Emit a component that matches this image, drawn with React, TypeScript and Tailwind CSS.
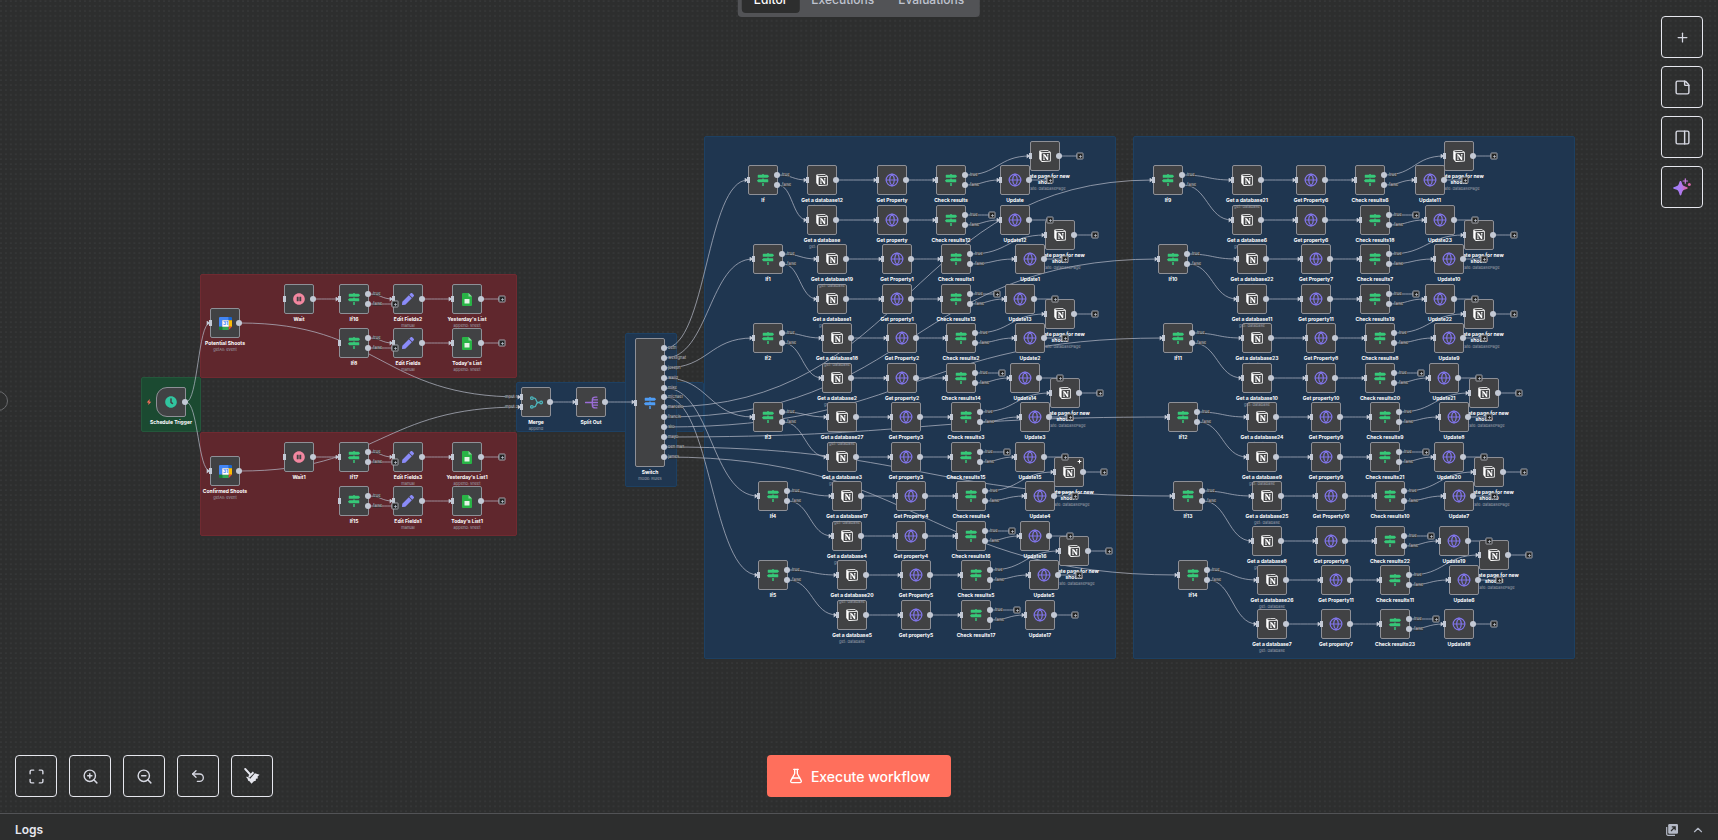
import { type ReactNode } from 'react';
import { ChevronUp, FlaskConical, Globe, Maximize, PanelRight, Plus, StickyNote, Undo2, ZoomIn, ZoomOut } from 'lucide-react';
import { FaClock, FaMapSigns, FaPauseCircle, FaPen } from 'react-icons/fa';
import { SiNotion } from 'react-icons/si';

type Kind = 'clock' | 'calendar' | 'wait' | 'if' | 'edit' | 'sheet' | 'merge' | 'split' | 'switch' | 'notion' | 'http';

type FlowNode = {
  kind: Kind;
  x: number;
  y: number;
  label: string;
  sub?: string;
  front?: boolean;
  noInput?: boolean;
};

type Edge = [number, number, number, number];
type Point = [number, number];
type PortLabel = { x: number; y: number; text: string };

const nodes: FlowNode[] = [];
const edges: Edge[] = [];
const pluses: Point[] = [];
const portLabels: PortLabel[] = [];

const HALF = 15;

function link(x1: number, y1: number, x2: number, y2: number) {
  edges.push([x1 + HALF, y1, x2 - HALF, y2]);
}

function stub(x: number, y: number, length: number) {
  edges.push([x + HALF, y, x + length, y]);
  pluses.push([x + length, y]);
}

function branchLabels(x: number, y: number) {
  portLabels.push({ x: x + 19, y: y - 5, text: 'true' }, { x: x + 19, y: y + 5, text: 'false' });
}

/* ---------- left part: calendars and sheets ---------- */

nodes.push(
  { kind: 'clock', x: 171, y: 402, label: 'Schedule Trigger', noInput: true },
  { kind: 'calendar', x: 225, y: 323, label: 'Potential Shoots', sub: 'getAll: event' },
  { kind: 'calendar', x: 225, y: 471, label: 'Confirmed Shoots', sub: 'getAll: event' },
);
link(171, 402, 225, 323);
link(171, 402, 225, 471);
edges.push([240, 323, 521, 397], [240, 471, 521, 407]);

const sheetRows = [
  { y: 299, wait: 'Wait', cond: 'If16', edit: 'Edit Fields2', sheet: "Yesterday's List" },
  { y: 343, cond: 'If8', edit: 'Edit Fields', sheet: "Today's List" },
  { y: 457, wait: 'Wait1', cond: 'If17', edit: 'Edit Fields3', sheet: "Yesterday's List1" },
  { y: 501, cond: 'If15', edit: 'Edit Fields1', sheet: "Today's List1" },
];

for (const row of sheetRows) {
  if (row.wait) {
    nodes.push({ kind: 'wait', x: 299, y: row.y, label: row.wait });
    link(299, row.y, 354, row.y);
  }
  nodes.push(
    { kind: 'if', x: 354, y: row.y, label: row.cond },
    { kind: 'edit', x: 408, y: row.y, label: row.edit, sub: 'manual' },
    { kind: 'sheet', x: 467, y: row.y, label: row.sheet, sub: 'append: sheet' },
  );
  link(354, row.y - 5, 408, row.y);
  stub(354, row.y + 5, 41);
  branchLabels(354, row.y);
  link(408, row.y, 467, row.y);
  stub(467, row.y, 35);
}

/* ---------- merge, split, switch ---------- */

nodes.push(
  { kind: 'merge', x: 536, y: 402, label: 'Merge', sub: 'append' },
  { kind: 'split', x: 591, y: 402, label: 'Split Out' },
  { kind: 'switch', x: 650, y: 402, label: 'Switch', sub: 'mode: Rules' },
);
link(536, 402, 591, 402);
link(591, 402, 650, 402);
portLabels.push({ x: 505, y: 397, text: 'Input 1' }, { x: 505, y: 407, text: 'Input 2' });

const people = ['beth', 'weslighat', 'joseph', 'walid', 'mike', 'michael', 'marcelo', 'francis', 'silo', 'mayo', 'ben max', 'james'];
const switchY = (i: number) => Math.round(348 + i * 9.88);
people.forEach((text, i) => portLabels.push({ x: 668, y: switchY(i), text }));

/* ---------- property branches ---------- */

type Line = { y: number; db: string; prop: string; check: string; update: string; xs: [number, number, number, number]; front?: boolean };
type Branch = { x: number; y: number; label: string; main: Line; alt: Line; page: [number, number, string] };

const branches: Branch[] = [
  {
    x: 763, y: 180, label: 'If', page: [1045, 156, ''],
    main: { y: 180, db: '12', prop: '', check: '', update: '', xs: [822, 892, 951, 1015] },
    alt: { y: 220, db: '', prop: '', check: '12', update: '12', xs: [822, 892, 951, 1015] },
  },
  {
    x: 768, y: 259, label: 'If1', page: [1060, 235, '1'],
    main: { y: 259, db: '19', prop: '1', check: '1', update: '1', xs: [832, 897, 956, 1030], front: true },
    alt: { y: 299, db: '1', prop: '1', check: '13', update: '13', xs: [832, 897, 956, 1020] },
  },
  {
    x: 768, y: 338, label: 'If2', page: [1060, 314, '2'],
    main: { y: 338, db: '18', prop: '2', check: '2', update: '2', xs: [837, 902, 961, 1030], front: true },
    alt: { y: 378, db: '2', prop: '2', check: '14', update: '14', xs: [837, 902, 961, 1025] },
  },
  {
    x: 768, y: 417, label: 'If3', page: [1065, 393, '3'],
    main: { y: 417, db: '27', prop: '3', check: '3', update: '3', xs: [842, 906, 966, 1035], front: true },
    alt: { y: 457, db: '3', prop: '3', check: '15', update: '15', xs: [842, 906, 966, 1030] },
  },
  {
    x: 773, y: 496, label: 'If4', page: [1069, 472, '4'],
    main: { y: 496, db: '17', prop: '4', check: '4', update: '4', xs: [847, 911, 971, 1040], front: true },
    alt: { y: 536, db: '4', prop: '4', check: '16', update: '16', xs: [847, 911, 971, 1035] },
  },
  {
    x: 773, y: 575, label: 'If5', page: [1074, 551, '5'],
    main: { y: 575, db: '20', prop: '5', check: '5', update: '5', xs: [852, 916, 976, 1044], front: true },
    alt: { y: 615, db: '5', prop: '5', check: '17', update: '17', xs: [852, 916, 976, 1040] },
  },
  {
    x: 1168, y: 180, label: 'If9', page: [1459, 156, '6'],
    main: { y: 180, db: '21', prop: '6', check: '6', update: '11', xs: [1247, 1311, 1370, 1430], front: true },
    alt: { y: 220, db: '6', prop: '6', check: '18', update: '23', xs: [1247, 1311, 1375, 1440] },
  },
  {
    x: 1173, y: 259, label: 'If10', page: [1479, 235, '7'],
    main: { y: 259, db: '22', prop: '7', check: '7', update: '10', xs: [1252, 1316, 1375, 1449] },
    alt: { y: 299, db: '11', prop: '11', check: '19', update: '22', xs: [1252, 1316, 1375, 1440], front: true },
  },
  {
    x: 1178, y: 338, label: 'If11', page: [1479, 314, '8'],
    main: { y: 338, db: '23', prop: '8', check: '8', update: '9', xs: [1257, 1321, 1380, 1449] },
    alt: { y: 378, db: '10', prop: '10', check: '20', update: '21', xs: [1257, 1321, 1380, 1444], front: true },
  },
  {
    x: 1183, y: 417, label: 'If12', page: [1484, 393, '9'],
    main: { y: 417, db: '24', prop: '9', check: '9', update: '8', xs: [1262, 1326, 1385, 1454] },
    alt: { y: 457, db: '9', prop: '9', check: '21', update: '20', xs: [1262, 1326, 1385, 1449], front: true },
  },
  {
    x: 1188, y: 496, label: 'If13', page: [1489, 472, '10'],
    main: { y: 496, db: '25', prop: '10', check: '10', update: '7', xs: [1267, 1331, 1390, 1459] },
    alt: { y: 541, db: '8', prop: '8', check: '22', update: '19', xs: [1267, 1331, 1390, 1454], front: true },
  },
  {
    x: 1193, y: 575, label: 'If14', page: [1494, 555, '11'],
    main: { y: 580, db: '26', prop: '11', check: '11', update: '6', xs: [1272, 1336, 1395, 1464], front: true },
    alt: { y: 624, db: '7', prop: '7', check: '23', update: '18', xs: [1272, 1336, 1395, 1459] },
  },
];

branches.forEach((b, i) => {
  nodes.push({ kind: 'if', x: b.x, y: b.y, label: b.label });
  edges.push([665, switchY(i), b.x - HALF, b.y]);
  branchLabels(b.x, b.y);
  const [px, py, n] = b.page;
  nodes.push({ kind: 'notion', x: px, y: py, label: `Create page for new shoot${n}`, sub: 'create: databasePage' });
  stub(px, py, 35);

  [b.main, b.alt].forEach((line, k) => {
    const [dx, hx, cx, ux] = line.xs;
    const y = line.y;
    nodes.push(
      { kind: 'notion', x: dx, y, label: `Get a database${line.db}`, sub: 'get: database', front: line.front },
      { kind: 'http', x: hx, y, label: `${k === 0 ? 'Get Property' : 'Get property'}${line.prop}` },
      { kind: 'if', x: cx, y, label: `Check results${line.check}` },
      { kind: 'http', x: ux, y, label: `Update${line.update}` },
    );
    link(b.x, k === 0 ? b.y - 5 : b.y + 5, dx, y);
    link(dx, y, hx, y);
    link(hx, y, cx, y);
    link(cx, y + 5, ux, y);
    branchLabels(cx, y);
    stub(ux, y, 35);
    if (k === 0) link(cx, y - 5, px, py);
    else stub(cx, y - 5, 41);
  });
});

/* ---------- icons ---------- */

function CalendarIcon() {
  return (
    <svg viewBox="0 0 24 24" className="size-[13px]">
      <path d="M2 0h16v6H6v12H0V2a2 2 0 0 1 2-2z" fill="#4285f4" />
      <path d="M18 0h4a2 2 0 0 1 2 2v4h-6z" fill="#1967d2" />
      <path d="M18 6h6v12h-6z" fill="#fbbc04" />
      <path d="M6 18h12v6H6z" fill="#34a853" />
      <path d="M0 18h6v6H2a2 2 0 0 1-2-2z" fill="#188038" />
      <path d="M18 18h6l-6 6z" fill="#ea4335" />
      <path d="M6 6h12v12H6z" fill="#fff" />
      <text x="12" y="15.500" textAnchor="middle" fontSize="9" fontWeight="700" fill="#4285f4" fontFamily="Inter, sans-serif">31</text>
    </svg>
  );
}

function SheetIcon() {
  return (
    <svg viewBox="0 0 20 26" className="h-[13px] w-[10px]">
      <path d="M2 0h11l7 7v17a2 2 0 0 1-2 2H2a2 2 0 0 1-2-2V2a2 2 0 0 1 2-2z" fill="#28b446" />
      <path d="M13 0l7 7h-7z" fill="#8ed1a0" />
      <path d="M5 12h10v9H5z" fill="#e3f4e6" />
    </svg>
  );
}

function MergeIcon() {
  return (
    <svg viewBox="0 0 24 24" className="size-[13px]" fill="none" stroke="#4db6bd" strokeWidth="2.400">
      <circle cx="3.500" cy="4" r="2.400" />
      <circle cx="3.500" cy="20" r="2.400" />
      <circle cx="20.500" cy="12" r="2.400" />
      <path d="M6 4h2c2.500 0 3 1.500 3.500 4s1.500 4 4 4h2.500M6 20h2c2.500 0 3-1.500 3.500-4s1.500-4 4-4" />
    </svg>
  );
}

function SplitIcon() {
  return (
    <svg viewBox="0 0 24 24" className="size-[13px]" fill="none" stroke="#9b6dd7" strokeWidth="2.400" strokeLinecap="round">
      <path d="M1 12h22M22 2h-3c-3.500 0-5.500 1.500-5.500 5v10c0 3.500 2 5 5.500 5h3M14 7h9M14 17h9" />
    </svg>
  );
}

function NodeIcon({ kind }: { kind: Kind }): ReactNode {
  switch (kind) {
    case 'clock':
      return <FaClock className="size-[12px] text-[#31c49f]" />;
    case 'calendar':
      return <CalendarIcon />;
    case 'wait':
      return <FaPauseCircle className="size-[12px] text-[#f287a0]" />;
    case 'if':
      return <FaMapSigns className="size-[12px] text-[#36c878]" />;
    case 'edit':
      return <FaPen className="size-[12px] text-[#8a8bf8]" />;
    case 'sheet':
      return <SheetIcon />;
    case 'merge':
      return <MergeIcon />;
    case 'split':
      return <SplitIcon />;
    case 'switch':
      return <FaMapSigns className="size-[12px] text-[#4f9df5]" />;
    case 'notion':
      return <SiNotion className="size-[12px] text-white" />;
    default:
      return <Globe className="size-[14px] text-[#8175ea]" strokeWidth={2} />;
  }
}

/* ---------- canvas pieces ---------- */

const outPort = 'absolute -right-[3px] size-[6px] -translate-y-1/2 rounded-full bg-[#c3c9d5]';
const inPort = 'absolute -left-[2px] h-[6px] w-[3px] -translate-y-1/2 bg-[#c3c9d5]';

function Ports({ kind, noInput }: { kind: Kind; noInput?: boolean }) {
  const split = kind === 'if';
  return (
    <>
      {!noInput && kind !== 'merge' && <span className={`${inPort} top-1/2`} />}
      {kind === 'merge' && (
        <>
          <span className={`${inPort} top-[9px]`} />
          <span className={`${inPort} top-[19px]`} />
        </>
      )}
      {split && (
        <>
          <span className={`${outPort} top-[9px]`} />
          <span className={`${outPort} top-[19px]`} />
        </>
      )}
      {kind === 'switch' &&
        people.map((name, i) => <span key={name} className={outPort} style={{ top: switchY(i) - 339 }} />)}
      {!split && kind !== 'switch' && <span className={`${outPort} top-1/2`} />}
    </>
  );
}

function NodeCard({ node }: { node: FlowNode }) {
  const tall = node.kind === 'switch';
  return (
    <div
      className={`absolute flex w-[30px] flex-col items-center ${node.front ? 'z-10' : ''}`}
      style={{ left: node.x - HALF, top: node.y - (tall ? 64 : HALF) }}
    >
      <div
        className={`relative flex w-full shrink-0 items-center justify-center border border-[#8e9097] bg-[#414244] ${
          tall ? 'h-[129px]' : 'h-[30px]'
        } ${node.kind === 'clock' ? 'rounded-l-[11px] rounded-r-[2px]' : 'rounded-[2px]'}`}
      >
        <NodeIcon kind={node.kind} />
        <Ports kind={node.kind} noInput={node.noInput} />
      </div>
      <div className="mt-[2px] w-[50px] text-center text-[5px] leading-[6px] font-bold text-white">{node.label}</div>
      {node.sub && (
        <div className="mt-px text-center text-[4px] leading-[6px] whitespace-nowrap text-[#9fa3ad]">{node.sub}</div>
      )}
    </div>
  );
}

function curve([x1, y1, x2, y2]: Edge) {
  const mid = (x1 + x2) / 2;
  return `M${x1} ${y1}C${mid} ${y1} ${mid} ${y2} ${x2} ${y2}`;
}

function Edges() {
  return (
    <svg className="absolute inset-0 size-full" aria-hidden="true">
      <defs>
        <marker id="arrow" viewBox="0 0 4 6" refX="4" refY="3" markerWidth="4" markerHeight="5" orient="auto" markerUnits="userSpaceOnUse">
          <path d="M0 0l4 3-4 3z" fill="#c3c9d5" />
        </marker>
      </defs>
      {edges.map((edge, i) => (
        <path key={i} d={curve(edge)} fill="none" stroke="#b4b9c6" strokeOpacity="0.72" markerEnd="url(#arrow)" />
      ))}
    </svg>
  );
}

function DotGrid() {
  return (
    <svg className="absolute inset-0 size-full" aria-hidden="true">
      <defs>
        <pattern id="dots" width="4.940" height="4.940" patternUnits="userSpaceOnUse">
          <circle cx="1" cy="1" r="0.600" fill="#4b4d50" />
        </pattern>
      </defs>
      <rect width="100%" height="100%" fill="url(#dots)" />
    </svg>
  );
}

const stickies = [
  'left-[141px] top-[377px] h-[55px] w-[60px] bg-[#1b4a31] border-[#24573b]',
  'left-[200px] top-[274px] h-[104px] w-[317px] bg-[#60272d] border-[#702a31]',
  'left-[200px] top-[432px] h-[104px] w-[317px] bg-[#60272d] border-[#702a31]',
  'left-[516px] top-[382px] h-[50px] w-[188px] bg-[#1f3650] border-[#1d4062]',
  'left-[625px] top-[333px] h-[154px] w-[52px] bg-[#1f3650] border-[#1d4062]',
  'left-[704px] top-[136px] h-[523px] w-[412px] bg-[#1f3650] border-[#1d4062]',
  'left-[1133px] top-[136px] h-[523px] w-[442px] bg-[#1f3650] border-[#1d4062]',
];

function Canvas() {
  return (
    <div className="absolute inset-0 overflow-hidden">
      <DotGrid />
      {stickies.map((box) => (
        <div key={box} className={`absolute rounded-[2px] border ${box}`} />
      ))}
      <Edges />
      {portLabels.map((p, i) => (
        <span
          key={i}
          className="absolute -translate-y-1/2 bg-[#2d2e2e]/60 text-[4px] leading-[4px] whitespace-nowrap text-[#c3c6cf]"
          style={{ left: p.x, top: p.y }}
        >
          {p.text}
        </span>
      ))}
      {nodes.map((node) => (
        <NodeCard key={`${node.label}-${node.x}-${node.y}`} node={node} />
      ))}
      {pluses.map(([x, y]) => (
        <button
          key={`${x}-${y}`}
          type="button"
          aria-label="Add node"
          className="absolute z-20 flex size-[7px] -translate-1/2 items-center justify-center rounded-[1px] border border-[#a3a5ac] bg-[#232424]"
          style={{ left: x, top: y }}
        >
          <Plus className="size-[4px] shrink-0 text-[#c3c9d5]" strokeWidth={4} />
        </button>
      ))}
      <svg viewBox="0 0 8 8" className="absolute top-[399px] left-[146px] size-[6px]" aria-hidden="true">
        <path d="M5 0L1 4.500h2.500L3 8l4-4.500H4.500z" fill="#ff6f5c" />
      </svg>
      <Plus className="absolute top-[459px] left-[1077px] z-20 size-[5px] text-white" strokeWidth={5} aria-hidden="true" />
    </div>
  );
}

/* ---------- page chrome ---------- */

function ToolButton({ label, children }: { label: string; children: ReactNode }) {
  return (
    <button
      type="button"
      aria-label={label}
      className="flex size-[42px] items-center justify-center rounded-[4px] border border-[#e6e7ee] text-[#d6d8e2]"
    >
      {children}
    </button>
  );
}

function SparkleIcon() {
  return (
    <svg viewBox="0 0 18 18" className="size-[18px]">
      <defs>
        <linearGradient id="spark" x1="0" y1="0" x2="1" y2="0">
          <stop offset="0" stopColor="#9a7df9" />
          <stop offset="0.550" stopColor="#b07af0" />
          <stop offset="1" stopColor="#e0609a" />
        </linearGradient>
      </defs>
      <path d="M7.500 3c.8 0 1 .6 1.300 1.800.7 2.600 1.300 3.200 4 3.900 1.200.3 1.900.5 1.900 1.300s-.7 1-1.900 1.300c-2.700.7-3.300 1.400-4 4C8.500 16.500 8.300 17.500 7.500 17.500s-1-1-1.300-2.200c-.7-2.600-1.300-3.300-4-4C1 11 .2 10.800.2 10s.8-1 2-1.300c2.700-.7 3.300-1.300 4-3.900C6.500 3.600 6.700 3 7.500 3z" fill="url(#spark)" />
      <path d="M12.300.8v4.400M10.100 3h4.400" stroke="#c77be0" strokeWidth="1.200" strokeLinecap="round" />
      <circle cx="16.300" cy="6.500" r="1.500" fill="#d766a8" />
    </svg>
  );
}

function BroomIcon() {
  return (
    <svg viewBox="0 0 16 16" className="size-[16px]">
      <path d="M1.200 1l4.600 5" stroke="#e6e7ee" strokeWidth="1.900" strokeLinecap="round" />
      <path d="M4.200 8.200L8.800 3.400l1.300 1.500-4.600 4.800z" fill="#e6e7ee" />
      <path d="M10.900 5.300l4.700 1.500-2 1.700.2 1.900-1.900.4-.1 2-1.900.5-2.400 2.500-2-2.600-1.300-.5-.8-2.100-1.600-1.900 2.300.3 2.100 1.800z" fill="#e6e7ee" />
    </svg>
  );
}

function PopOutIcon() {
  return (
    <svg viewBox="0 0 12 12" className="size-[12px]">
      <path d="M.7 3v7a1.300 1.300 0 0 0 1.300 1.300h7" fill="none" stroke="#b4b9c6" strokeWidth="1.200" />
      <rect x="2.200" width="9.800" height="9.800" rx="1.200" fill="#b4b9c6" />
      <path d="M5 7l4-4M5.800 2.800h3.400v3.400" fill="none" stroke="#2d2e2e" strokeWidth="1.200" />
    </svg>
  );
}

export default function App() {
  return (
    <div className="flex h-screen flex-col overflow-hidden bg-[#2d2e2e] font-['Inter',sans-serif] text-[#e6e7ee]">
      <main className="relative min-h-0 flex-1 overflow-hidden">
        <Canvas />

        <span className="absolute top-[391px] -left-[12px] size-[20px] rounded-full border border-[#6a6b6e] bg-[#2d2e2e]" />

        <nav className="absolute -top-[17px] left-1/2 z-30 flex -translate-x-1/2 rounded-[4px] bg-[#525356] p-1 text-[12px] leading-[26px] font-medium text-[#bfc3cf]">
          <a href="#editor" className="rounded-[4px] bg-[#2d2e2e] px-3 text-white">Editor</a>
          <a href="#executions" className="px-3">Executions</a>
          <a href="#evaluations" className="px-3">Evaluations</a>
        </nav>

        <div className="absolute top-4 right-[15px] z-30 flex flex-col gap-2">
          <ToolButton label="Add node"><Plus className="size-[15px]" strokeWidth={2} /></ToolButton>
          <ToolButton label="Add sticky note"><StickyNote className="size-[17px]" strokeWidth={2} /></ToolButton>
          <ToolButton label="Toggle panel"><PanelRight className="size-[17px]" strokeWidth={2} /></ToolButton>
          <ToolButton label="Assistant"><SparkleIcon /></ToolButton>
        </div>

        <div className="absolute bottom-4 left-[15px] z-30 flex gap-3">
          <ToolButton label="Zoom to fit"><Maximize className="size-[17px]" strokeWidth={2} /></ToolButton>
          <ToolButton label="Zoom in"><ZoomIn className="size-[17px]" strokeWidth={2} /></ToolButton>
          <ToolButton label="Zoom out"><ZoomOut className="size-[17px]" strokeWidth={2} /></ToolButton>
          <ToolButton label="Undo"><Undo2 className="size-[16px]" strokeWidth={2} /></ToolButton>
          <ToolButton label="Tidy up"><BroomIcon /></ToolButton>
        </div>

        <button
          type="button"
          className="absolute bottom-4 left-1/2 z-30 flex h-[42px] w-[184px] -translate-x-1/2 items-center justify-center gap-[7px] rounded-[4px] bg-[#ff6f5c] text-[14px] font-medium text-white"
        >
          <FlaskConical className="size-[16px]" strokeWidth={2} />
          Execute workflow
        </button>
      </main>

      <footer className="flex h-[27px] shrink-0 items-center justify-between border-t border-[#525356] bg-[#2d2e2e] pt-[6px] pr-[13px] pl-[15px]">
        <h2 className="text-[12px] leading-[16px] font-semibold">Logs</h2>
        <div className="flex items-center gap-[13px] text-[#b4b9c6]">
          <button type="button" aria-label="Pop out logs"><PopOutIcon /></button>
          <button type="button" aria-label="Open logs"><ChevronUp className="size-[14px]" strokeWidth={2} /></button>
        </div>
      </footer>
    </div>
  );
}
